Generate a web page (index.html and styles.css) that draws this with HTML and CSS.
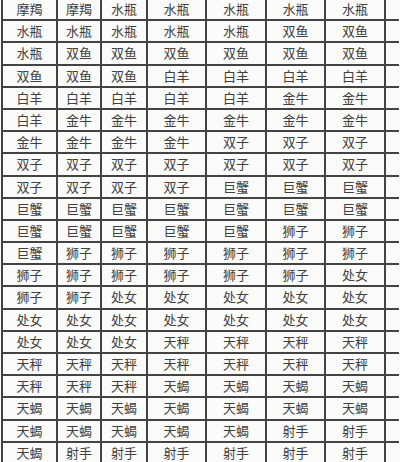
FILE: index.html
```html
<!DOCTYPE html>
<html lang="zh">
<head>
<meta charset="utf-8">
<link rel="stylesheet" href="styles.css">
</head>
<body>
<div class="sheet">
<div class="c">摩羯</div><div class="c">摩羯</div><div class="c">水瓶</div><div class="c">水瓶</div><div class="c">水瓶</div><div class="c">水瓶</div><div class="c">水瓶</div><div class="c"></div>
<div class="c">水瓶</div><div class="c">水瓶</div><div class="c">水瓶</div><div class="c">水瓶</div><div class="c">水瓶</div><div class="c">双鱼</div><div class="c">双鱼</div><div class="c"></div>
<div class="c">水瓶</div><div class="c">双鱼</div><div class="c">双鱼</div><div class="c">双鱼</div><div class="c">双鱼</div><div class="c">双鱼</div><div class="c">双鱼</div><div class="c"></div>
<div class="c">双鱼</div><div class="c">双鱼</div><div class="c">双鱼</div><div class="c">白羊</div><div class="c">白羊</div><div class="c">白羊</div><div class="c">白羊</div><div class="c"></div>
<div class="c">白羊</div><div class="c">白羊</div><div class="c">白羊</div><div class="c">白羊</div><div class="c">白羊</div><div class="c">金牛</div><div class="c">金牛</div><div class="c"></div>
<div class="c">白羊</div><div class="c">金牛</div><div class="c">金牛</div><div class="c">金牛</div><div class="c">金牛</div><div class="c">金牛</div><div class="c">金牛</div><div class="c"></div>
<div class="c">金牛</div><div class="c">金牛</div><div class="c">金牛</div><div class="c">金牛</div><div class="c">双子</div><div class="c">双子</div><div class="c">双子</div><div class="c"></div>
<div class="c">双子</div><div class="c">双子</div><div class="c">双子</div><div class="c">双子</div><div class="c">双子</div><div class="c">双子</div><div class="c">双子</div><div class="c"></div>
<div class="c">双子</div><div class="c">双子</div><div class="c">双子</div><div class="c">双子</div><div class="c">巨蟹</div><div class="c">巨蟹</div><div class="c">巨蟹</div><div class="c"></div>
<div class="c">巨蟹</div><div class="c">巨蟹</div><div class="c">巨蟹</div><div class="c">巨蟹</div><div class="c">巨蟹</div><div class="c">巨蟹</div><div class="c">巨蟹</div><div class="c"></div>
<div class="c">巨蟹</div><div class="c">巨蟹</div><div class="c">巨蟹</div><div class="c">巨蟹</div><div class="c">巨蟹</div><div class="c">狮子</div><div class="c">狮子</div><div class="c"></div>
<div class="c">巨蟹</div><div class="c">狮子</div><div class="c">狮子</div><div class="c">狮子</div><div class="c">狮子</div><div class="c">狮子</div><div class="c">狮子</div><div class="c"></div>
<div class="c">狮子</div><div class="c">狮子</div><div class="c">狮子</div><div class="c">狮子</div><div class="c">狮子</div><div class="c">狮子</div><div class="c">处女</div><div class="c"></div>
<div class="c">狮子</div><div class="c">狮子</div><div class="c">处女</div><div class="c">处女</div><div class="c">处女</div><div class="c">处女</div><div class="c">处女</div><div class="c"></div>
<div class="c">处女</div><div class="c">处女</div><div class="c">处女</div><div class="c">处女</div><div class="c">处女</div><div class="c">处女</div><div class="c">处女</div><div class="c"></div>
<div class="c">处女</div><div class="c">处女</div><div class="c">处女</div><div class="c">天秤</div><div class="c">天秤</div><div class="c">天秤</div><div class="c">天秤</div><div class="c"></div>
<div class="c">天秤</div><div class="c">天秤</div><div class="c">天秤</div><div class="c">天秤</div><div class="c">天秤</div><div class="c">天秤</div><div class="c">天秤</div><div class="c"></div>
<div class="c">天秤</div><div class="c">天秤</div><div class="c">天秤</div><div class="c">天蝎</div><div class="c">天蝎</div><div class="c">天蝎</div><div class="c">天蝎</div><div class="c"></div>
<div class="c">天蝎</div><div class="c">天蝎</div><div class="c">天蝎</div><div class="c">天蝎</div><div class="c">天蝎</div><div class="c">天蝎</div><div class="c">天蝎</div><div class="c"></div>
<div class="c">天蝎</div><div class="c">天蝎</div><div class="c">天蝎</div><div class="c">天蝎</div><div class="c">天蝎</div><div class="c">射手</div><div class="c">射手</div><div class="c"></div>
<div class="c">天蝎</div><div class="c">射手</div><div class="c">射手</div><div class="c">射手</div><div class="c">射手</div><div class="c">射手</div><div class="c">射手</div><div class="c"></div>
</div>
</body>
</html>
```

FILE: styles.css
```css
html, body {
  margin: 0;
  padding: 0;
  background: #fbfbf9;
  overflow: hidden;
}

body {
  width: 400px;
  height: 462px;
  font-family: "Noto Sans CJK SC", "Noto Sans", sans-serif;
}

.sheet {
  display: grid;
  grid-template-columns: 53px 42px 44px 57px 58px 57px 58px 13px;
  grid-auto-rows: 20.2px;
  gap: 2px;
  padding: 2px 0 0 2px;
  margin: -3px 0 0 1px;
  width: max-content;
  background: #434343;
}

.c {
  background: #fbfbf9;
  color: #404040;
  font-size: 13px;
  line-height: 20px;
  text-align: center;
  white-space: nowrap;
}
```
